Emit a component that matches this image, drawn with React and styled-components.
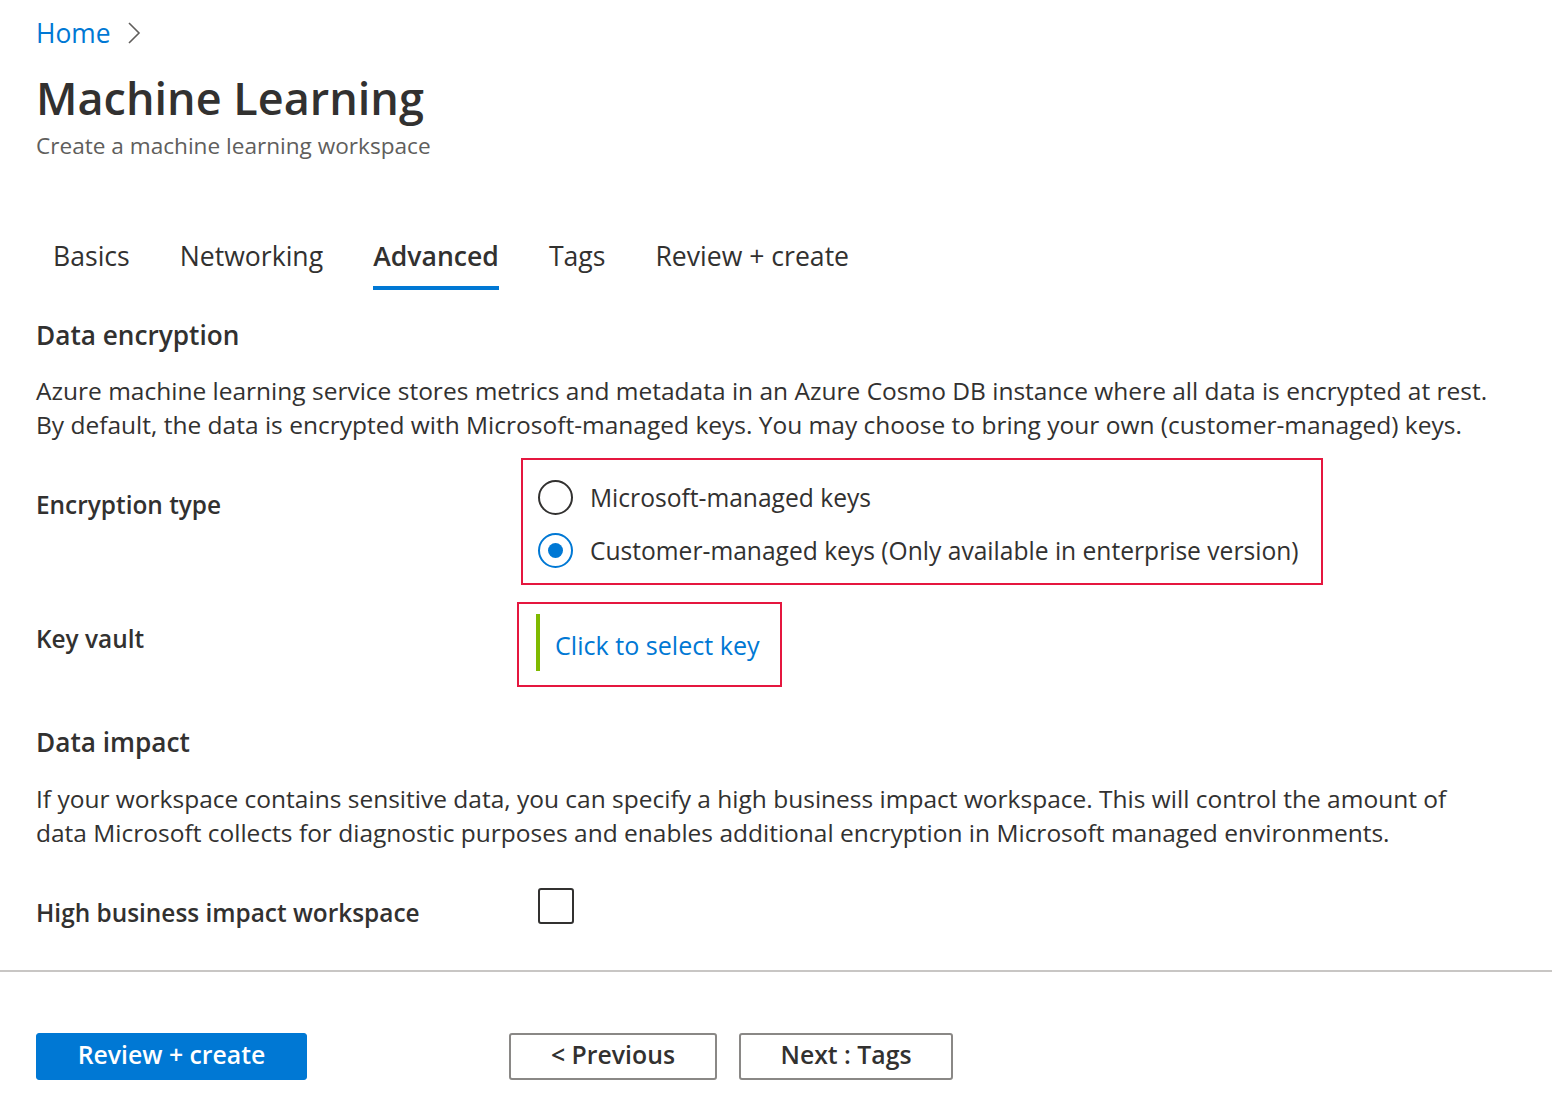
import React from "react";
import styled, { createGlobalStyle } from "styled-components";

const Global = createGlobalStyle`
  html, body { margin: 0; padding: 0; background: #fff; }
  body { font-family: "Open Sans", "Noto Sans", sans-serif; color: #323130; }
  * { box-sizing: border-box; }
`;

const Page = styled.div`
  width: 1552px;
  min-height: 1119px;
  background: #fff;
`;

const Content = styled.div`
  padding: 16px 36px 0 36px;
`;

const Breadcrumb = styled.nav`
  display: flex;
  align-items: center;
  gap: 16px;
  height: 34px;
  font-size: 26.4px;
`;

const Crumb = styled.a`
  color: #0078d4;
  text-decoration: none;
`;

const Title = styled.h1`
  margin: 16px 0 0;
  font-size: 45px;
  line-height: 64px;
  font-weight: 600;
  color: #323130;
`;

const Subtitle = styled.div`
  font-size: 22.6px;
  line-height: 32px;
  color: #605e5c;
`;

const Tabs = styled.div`
  display: flex;
  margin-top: 74px;
  padding-left: 17px;
  gap: 50px;
`;

const Tab = styled.div`
  font-size: 26.6px;
  line-height: 40px;
  padding-bottom: 10px;
  border-bottom: 4px solid ${(p) => (p.$active ? "#0078d4" : "transparent")};
  font-weight: ${(p) => (p.$active ? 600 : 400)};
  color: #323130;
  white-space: nowrap;
`;

const SectionHeading = styled.h2`
  margin: ${(p) => p.$mt}px 0 0;
  font-size: 26.2px;
  line-height: 36px;
  font-weight: 600;
`;

const Paragraph = styled.p`
  margin: ${(p) => p.$mt}px 0 0;
  font-size: 24.5px;
  line-height: 34px;
  color: #323130;
  white-space: nowrap;
`;

const FieldRow = styled.div`
  display: grid;
  grid-template-columns: 481px auto;
  align-items: start;
  margin-top: ${(p) => p.$mt}px;
`;

const FieldLabel = styled.div`
  font-size: 24.4px;
  line-height: 34px;
  font-weight: 600;
  padding-top: ${(p) => p.$pt}px;
  white-space: nowrap;
`;

const Highlight = styled.div`
  justify-self: start;
  border: 2px solid #e5173f;
  margin-left: ${(p) => p.$ml || 0}px;
  padding: ${(p) => p.$pad};
`;

const RadioGroup = styled.div`
  display: flex;
  flex-direction: column;
  gap: 9px;
`;

const RadioRow = styled.label`
  display: flex;
  align-items: center;
  gap: 17px;
  height: 44px;
  font-size: 24.6px;
  color: #323130;
  white-space: nowrap;
`;

const RadioCircle = styled.span`
  width: 35px;
  height: 35px;
  border-radius: 50%;
  border: 2px solid ${(p) => (p.$checked ? "#0078d4" : "#323130")};
  display: flex;
  align-items: center;
  justify-content: center;
  flex-shrink: 0;
  &::after {
    content: "";
    width: 15px;
    height: 15px;
    border-radius: 50%;
    background: ${(p) => (p.$checked ? "#0078d4" : "transparent")};
  }
`;

const KeyPicker = styled.div`
  display: flex;
  align-items: center;
  gap: 15px;
  height: 57px;
`;

const GreenBar = styled.span`
  width: 4px;
  align-self: stretch;
  background: #7fba00;
`;

const KeyLink = styled.a`
  color: #0078d4;
  font-size: 25.1px;
  text-decoration: none;
  padding-top: 4px;
  white-space: nowrap;
`;

const Checkbox = styled.span`
  display: block;
  width: 36px;
  height: 36px;
  margin-left: 21px;
  border: 2px solid #323130;
  border-radius: 3px;
`;

const Divider = styled.hr`
  margin: 40px 0 0;
  border: 0;
  border-top: 2px solid #c8c6c4;
`;

const Footer = styled.div`
  display: flex;
  align-items: center;
  padding: 61px 36px 0;
`;

const Button = styled.button`
  height: 47px;
  width: ${(p) => p.$w}px;
  margin-left: ${(p) => p.$ml || 0}px;
  padding: 0 0 5px;
  font-family: inherit;
  font-size: 24.8px;
  font-weight: 600;
  border-radius: 3px;
  cursor: pointer;
  ${(p) =>
    p.$primary
      ? `background: #0078d4; color: #fff; border: 1px solid #0078d4;`
      : `background: #fff; color: #323130; border: 2px solid #8a8886;`}
`;

const Chevron = () => (
  <svg width="14" height="24" viewBox="0 0 14 24" fill="none">
    <path d="M2 2 L12 12 L2 22" stroke="#605e5c" strokeWidth="1.6" />
  </svg>
);

export default function App() {
  return (
    <Page>
      <Global />
      <Content>
        <Breadcrumb>
          <Crumb href="#">Home</Crumb>
          <Chevron />
        </Breadcrumb>
        <Title>Machine Learning</Title>
        <Subtitle>Create a machine learning workspace</Subtitle>
        <Tabs>
          <Tab>Basics</Tab>
          <Tab>Networking</Tab>
          <Tab $active>Advanced</Tab>
          <Tab>Tags</Tab>
          <Tab>Review + create</Tab>
        </Tabs>

        <SectionHeading $mt={27}>Data encryption</SectionHeading>
        <Paragraph $mt={21}>
          Azure machine learning service stores metrics and metadata in an Azure Cosmo DB instance where all data is encrypted at rest.
          <br />
          By default, the data is encrypted with Microsoft-managed keys. You may choose to bring your own (customer-managed) keys.
        </Paragraph>

        <FieldRow $mt={16}>
          <FieldLabel $pt={30}>Encryption type</FieldLabel>
          <Highlight $ml={4} $pad="15px 22px 11px 15px">
            <RadioGroup>
              <RadioRow>
                <RadioCircle />
                Microsoft-managed keys
              </RadioRow>
              <RadioRow>
                <RadioCircle $checked />
                Customer-managed keys (Only available in enterprise version)
              </RadioRow>
            </RadioGroup>
          </Highlight>
        </FieldRow>

        <FieldRow $mt={17}>
          <FieldLabel $pt={20}>Key vault</FieldLabel>
          <Highlight $pad="10px 20px 14px 17px">
            <KeyPicker>
              <GreenBar />
              <KeyLink href="#">Click to select key</KeyLink>
            </KeyPicker>
          </Highlight>
        </FieldRow>

        <SectionHeading $mt={37}>Data impact</SectionHeading>
        <Paragraph $mt={22}>
          If your workspace contains sensitive data, you can specify a high business impact workspace. This will control the amount of
          <br />
          data Microsoft collects for diagnostic purposes and enables additional encryption in Microsoft managed environments.
        </Paragraph>

        <FieldRow $mt={38}>
          <FieldLabel $pt={8}>High business impact workspace</FieldLabel>
          <Checkbox />
        </FieldRow>
      </Content>
      <Divider />
      <Footer>
        <Button $primary $w={271}>Review + create</Button>
        <Button $w={208} $ml={202}>&lt; Previous</Button>
        <Button $w={214} $ml={22}>Next : Tags</Button>
      </Footer>
    </Page>
  );
}
